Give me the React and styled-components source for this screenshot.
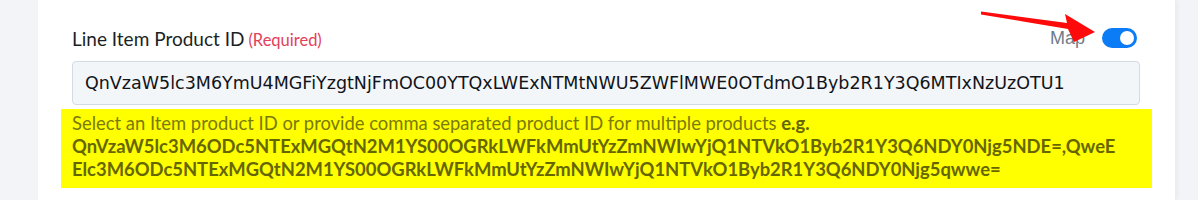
import React from "react";
import styled, { createGlobalStyle } from "styled-components";

const Global = createGlobalStyle`
  html, body { margin: 0; padding: 0; background: #f2f4f7; }
  * { box-sizing: border-box; }
`;

const Page = styled.div`
  min-height: 200px;
  padding: 0 23px 0 38px;
  background: #f2f4f7;
`;

const Card = styled.div`
  position: relative;
  height: 200px;
  background: #ffffff;
  padding: 26px 35px 0 34px;
  box-shadow: 2px 0 4px rgba(30, 50, 80, 0.05);
`;

const Header = styled.div`
  display: flex;
  align-items: center;
  justify-content: space-between;
  height: 24px;
  margin-bottom: 11px;
`;

const Label = styled.label`
  font-family: Lato, "Noto Sans", sans-serif;
  font-size: 19px;
  color: #1b1f24;
  display: flex;
  align-items: baseline;
  gap: 4px;
`;

const Required = styled.span`
  font-size: 16.5px;
  color: #e3405b;
`;

const MapGroup = styled.div`
  display: flex;
  align-items: center;
  gap: 17px;
  margin-right: 3px;
`;

const MapText = styled.span`
  font-family: "Liberation Sans", Arial, sans-serif;
  font-size: 18px;
  color: #6f7c8a;
`;

const Toggle = styled.span`
  display: flex;
  align-items: center;
  justify-content: ${(p) => (p.$on ? "flex-end" : "flex-start")};
  width: 35px;
  height: 20px;
  padding: 0 3px;
  border-radius: 10px;
  background: ${(p) => (p.$on ? "#0b7cf5" : "#c8ced6")};
`;

const Knob = styled.span`
  width: 14px;
  height: 14px;
  border-radius: 50%;
  background: #ffffff;
`;

const Input = styled.div`
  height: 44px;
  display: flex;
  align-items: center;
  padding: 0 12px;
  background: #f3f6f9;
  border: 1px solid #d5dbe2;
  border-radius: 4px;
  font-family: "DejaVu Sans", Verdana, sans-serif;
  font-size: 17.5px;
  color: #111418;
  white-space: nowrap;
  overflow: hidden;
`;

const Help = styled.div`
  margin: 4px -12px 0 -11px;
  padding: 3px 11px 7px;
  background: #ffff00;
  font-family: Lato, "Noto Sans", sans-serif;
  font-size: 18.4px;
  line-height: 23px;
  color: #7a7a08;
`;

const Example = styled.strong`
  font-weight: 700;
  color: #666600;
`;

const ExampleLine = styled.span`
  display: block;
  white-space: nowrap;
`;

const Arrow = styled.svg`
  position: absolute;
  left: 0;
  top: 0;
  overflow: visible;
  pointer-events: none;
`;

export default function App() {
  return (
    <>
      <Global />
      <Page>
        <Card>
          <Arrow width="1" height="1" viewBox="0 0 1 1">
            <polygon
              points="943,11.5 1029,23 1027,14 1057,32 1036,42 1030,29 943,14.5"
              fill="#ff0a0a"
            />
          </Arrow>
          <Header>
            <Label>
              Line Item Product ID<Required>(Required)</Required>
            </Label>
            <MapGroup>
              <MapText>Map</MapText>
              <Toggle $on>
                <Knob />
              </Toggle>
            </MapGroup>
          </Header>
          <Input>QnVzaW5lc3M6YmU4MGFiYzgtNjFmOC00YTQxLWExNTMtNWU5ZWFlMWE0OTdmO1Byb2R1Y3Q6MTIxNzUzOTU1</Input>
          <Help>
            Select an Item product ID or provide comma separated product ID for multiple products{" "}
            <Example>e.g.</Example>
            <Example>
              <ExampleLine>QnVzaW5lc3M6ODc5NTExMGQtN2M1YS00OGRkLWFkMmUtYzZmNWIwYjQ1NTVkO1Byb2R1Y3Q6NDY0Njg5NDE=,QweE</ExampleLine>
              <ExampleLine>Elc3M6ODc5NTExMGQtN2M1YS00OGRkLWFkMmUtYzZmNWIwYjQ1NTVkO1Byb2R1Y3Q6NDY0Njg5qwwe=</ExampleLine>
            </Example>
          </Help>
        </Card>
      </Page>
    </>
  );
}
